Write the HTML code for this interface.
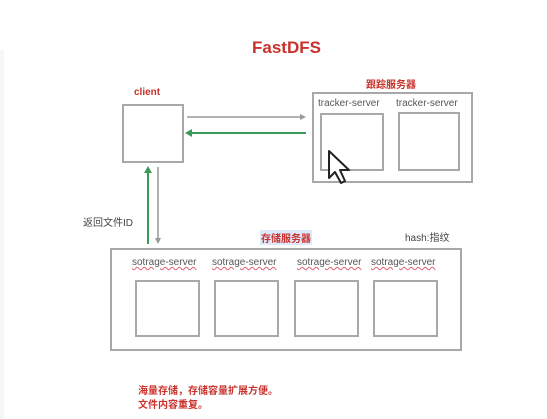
<!DOCTYPE html><html><head><style>
body{margin:0;width:547px;height:419px;background:#fff;position:relative;overflow:hidden;font-family:"Liberation Sans","Noto Sans CJK SC",sans-serif}
.a{position:absolute;white-space:nowrap}
.b{position:absolute;border:2px solid #a8a8a8;box-sizing:border-box}
.r{color:#c8322c;font-weight:bold}
.s{font-size:10px;color:#555;text-decoration:underline wavy #e06070;text-decoration-thickness:1px}
</style></head><body>
<div class="a" style="left:0;top:50px;width:4px;height:369px;background:#f7f7f7"></div>
<div class="a r" style="left:252px;top:38px;font-size:17px">FastDFS</div>
<div class="a r" style="left:134px;top:87px;font-size:10px">client</div>
<div class="a r" style="left:366px;top:76px;font-size:10px">跟踪服务器</div>
<div class="b" style="left:122px;top:104px;width:62px;height:59px"></div>
<div class="b" style="left:312px;top:92px;width:161px;height:91px"></div>
<div class="a" style="left:318px;top:98px;font-size:10px;color:#555">tracker-server</div>
<div class="a" style="left:396px;top:98px;font-size:10px;color:#555">tracker-server</div>
<div class="b" style="left:320px;top:113px;width:64px;height:58px"></div>
<div class="b" style="left:398px;top:112px;width:62px;height:59px"></div>
<svg class="a" style="left:0;top:0" width="547" height="419">
<line x1="187" y1="117" x2="303" y2="117" stroke="#999" stroke-width="1.5"/><path d="M300 114 L306 117 L300 120Z" fill="#999"/>
<line x1="191" y1="133" x2="306" y2="133" stroke="#3a9a5a" stroke-width="2"/><path d="M192 129 L185 133 L192 137Z" fill="#3a9a5a"/>
<line x1="148" y1="172" x2="148" y2="244" stroke="#3a9a5a" stroke-width="2"/><path d="M144 173 L148 166 L152 173Z" fill="#3a9a5a"/>
<line x1="158" y1="167" x2="158" y2="240" stroke="#999" stroke-width="1.5"/><path d="M155 238 L158 244 L161 238Z" fill="#999"/>
<path d="M329 151 L329 178 L335 172 L341 183 L345 181 L340 170 L349 170Z" fill="#fff" stroke="#222" stroke-width="2" stroke-linejoin="round"/>
</svg>
<div class="a" style="left:83px;top:214px;font-size:10px;color:#444">返回文件ID</div>
<div class="a r" style="left:260px;top:230px;font-size:10px;background:#dde8fa;padding:0 1px">存储服务器</div>
<div class="a" style="left:405px;top:229px;font-size:10px;color:#444">hash:指纹</div>
<div class="b" style="left:110px;top:248px;width:352px;height:103px"></div>
<div class="a s" style="left:132px;top:257px">sotrage-server</div>
<div class="a s" style="left:212px;top:257px">sotrage-server</div>
<div class="a s" style="left:297px;top:257px">sotrage-server</div>
<div class="a s" style="left:371px;top:257px">sotrage-server</div>
<div class="b" style="left:135px;top:280px;width:65px;height:57px"></div>
<div class="b" style="left:214px;top:280px;width:65px;height:57px"></div>
<div class="b" style="left:294px;top:280px;width:65px;height:57px"></div>
<div class="b" style="left:373px;top:280px;width:65px;height:57px"></div>
<div class="a r" style="left:138px;top:385px;font-size:10px;line-height:14px">海量存储，存储容量扩展方便。<br>文件内容重复。</div>
</body></html>
